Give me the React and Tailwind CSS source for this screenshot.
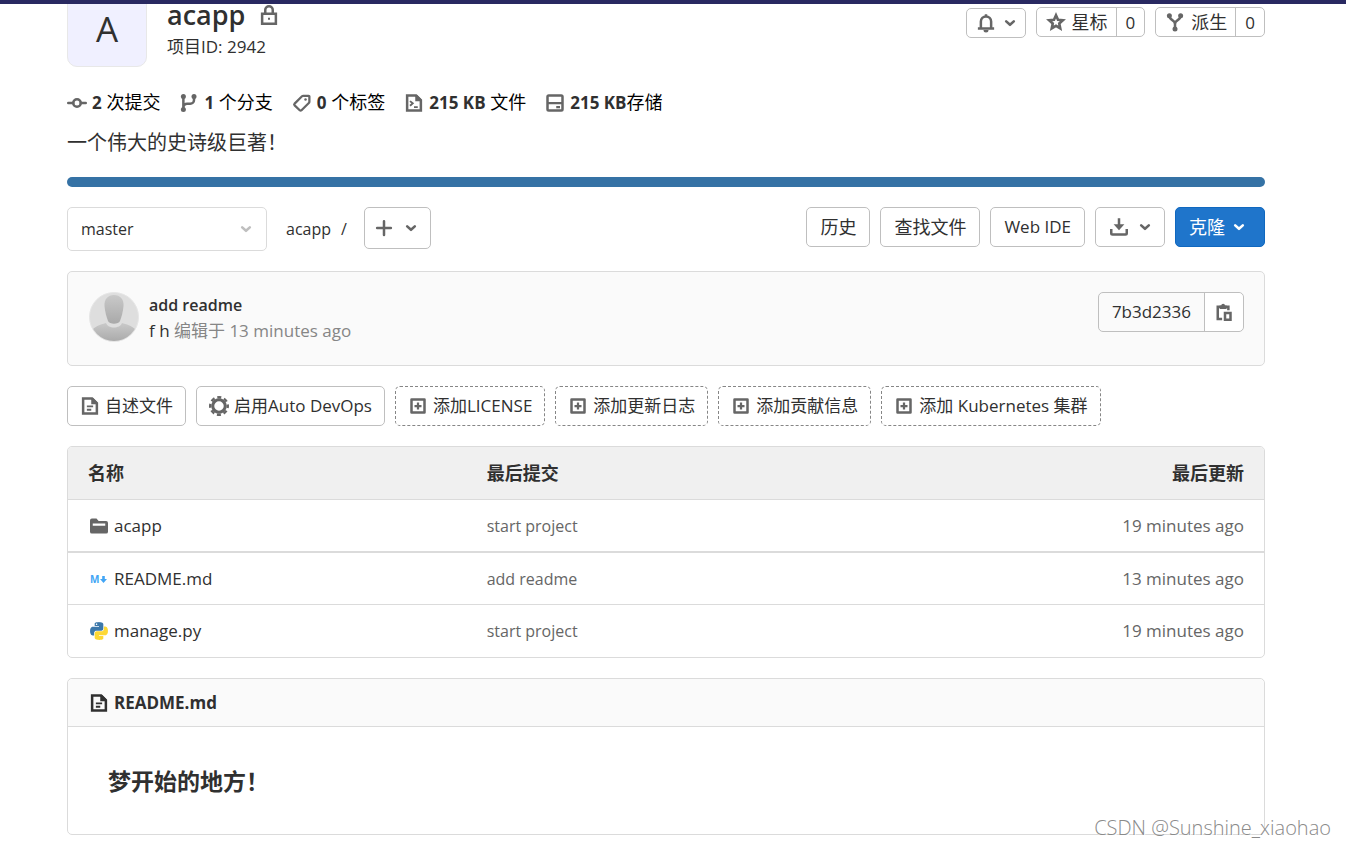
import React, { useState } from 'react';

const Icon = ({ children, className = 'h-5 w-5 text-[#666]' }) => (
  <svg
    viewBox="0 0 16 16"
    fill="none"
    stroke="currentColor"
    strokeWidth="2"
    className={`shrink-0 ${className}`}
    aria-hidden="true"
  >
    {children}
  </svg>
);

const Chevron = ({ className = '' }) => (
  <svg
    viewBox="0 0 12 12"
    fill="none"
    stroke="currentColor"
    strokeWidth="2.6"
    strokeLinecap="round"
    strokeLinejoin="round"
    className={`h-3 w-3 shrink-0 ${className}`}
    aria-hidden="true"
  >
    <path d="M2.2 4.4L6 7.8l3.8-3.4" />
  </svg>
);

const LockIcon = () => (
  <Icon>
    <path d="M2.5 7h11v8h-11zM5 7V4a3 3 0 0 1 6 0v3" />
    <path d="M7.2 10.2h1.6v1.6H7.2z" fill="currentColor" stroke="none" />
  </Icon>
);

const BellIcon = () => (
  <Icon>
    <path d="M3.9 12V6.8a4.1 4.1 0 0 1 8.2 0V12" />
    <path d="M1.5 12.4h13" />
    <path d="M6 13.5h4a2 2 0 0 1-4 0zM7 1h2v2H7z" fill="currentColor" stroke="none" />
  </Icon>
);

const StarIcon = () => (
  <Icon>
    <path d="M8 2.6l1.6 3.6 3.9.4-2.9 2.6.8 3.9L8 11.1l-3.4 2 .8-3.9-2.9-2.6 3.9-.4z" strokeWidth="2.1" />
  </Icon>
);

const ForkIcon = () => (
  <Icon>
    <circle cx="3.5" cy="3" r="2" fill="currentColor" stroke="none" />
    <circle cx="12.5" cy="3" r="2" fill="currentColor" stroke="none" />
    <circle cx="8" cy="13.5" r="2" fill="currentColor" stroke="none" />
    <path d="M3.5 3c0 4 4.5 3 4.5 6.5V13M12.5 3c0 4-4.5 3-4.5 6.5" />
  </Icon>
);

const CommitIcon = () => (
  <Icon>
    <circle cx="8" cy="8" r="3" />
    <path d="M1 8h4M11 8h4" strokeLinecap="round" />
  </Icon>
);

const BranchIcon = () => (
  <Icon>
    <circle cx="3.5" cy="2.8" r="2" fill="currentColor" stroke="none" />
    <circle cx="3.5" cy="13.2" r="2" fill="currentColor" stroke="none" />
    <circle cx="12" cy="2.8" r="2" fill="currentColor" stroke="none" />
    <path d="M3.5 3v10M12 3v2.5a3 3 0 0 1-3 3H6.5a3 3 0 0 0-3 3" />
  </Icon>
);

const TagIcon = () => (
  <Icon>
    <path d="M9 2.2h4.3a.6.6 0 0 1 .6.6V7a1.5 1.5 0 0 1-.45 1.05L7.6 13.8a1 1 0 0 1-1.4 0L2.1 9.9a1 1 0 0 1 0-1.4L8 2.6A1.5 1.5 0 0 1 9 2.2z" strokeWidth="1.8" />
    <circle cx="10.8" cy="5.2" r="1" fill="currentColor" stroke="none" />
  </Icon>
);

const CodeFileIcon = () => (
  <Icon>
    <path d="M2.5 2h7.2l3.8 3.8V14h-11z" />
    <path d="M9 1.5h1.5L14 5v1.5H9z" fill="currentColor" stroke="none" />
    <path d="M4.8 6.5L7 8.3l-2.2 1.9M8 11.3h3" strokeWidth="1.5" />
  </Icon>
);

const DiskIcon = () => (
  <Icon>
    <rect x="2" y="2" width="12" height="12" rx="1" />
    <path d="M2 8h12M9 11.2h3" strokeWidth="1.8" />
  </Icon>
);

const PlusIcon = () => (
  <Icon>
    <path d="M8 2.5v11M2.5 8h11" strokeLinecap="round" />
  </Icon>
);

const DownloadIcon = () => (
  <Icon>
    <path d="M8 1v7M1.8 9.5V13a1 1 0 0 0 1 1h10.4a1 1 0 0 0 1-1V9.5" />
    <path d="M3.7 5.8h8.6L8 10.6z" fill="currentColor" stroke="none" />
  </Icon>
);

const CopyIcon = () => (
  <Icon>
    <path d="M6.5 13.5H3V3.8h8.5v2.7" />
    <path d="M4.5 5.5V2.8h1.3a1.5 1.5 0 0 1 3 0h1.300v2.7z" fill="currentColor" stroke="none" />
    <path d="M8.800 8.800h4.400v5.400H8.800z" />
  </Icon>
);

const DocIcon = ({ className }) => (
  <Icon className={className}>
    <path d="M2.5 2h7.2l3.8 3.8V14h-11z" />
    <path d="M9 1.5h1.500L14 5v1.500H9z" fill="currentColor" stroke="none" />
    <path d="M5.500 8.300h5M5.500 11h3.500" strokeWidth="1.500" />
  </Icon>
);

const GearIcon = () => (
  <Icon>
    <circle cx="8" cy="8" r="5" strokeWidth="2.400" />
    <circle cx="8" cy="8" r="7" strokeWidth="2" strokeDasharray="3.200 2.298" strokeDashoffset="1.600" />
  </Icon>
);

const AddIcon = () => (
  <Icon>
    <path d="M2.800 2.800h10.400v10.400H2.800z" strokeLinejoin="round" />
    <path d="M8 5.200v5.600M5.200 8h5.600" strokeWidth="1.800" />
  </Icon>
);

const FolderIcon = () => (
  <Icon>
    <path
      d="M.8 3.500A1.500 1.500 0 0 1 2.300 2H6l1.700 2h6a1.500 1.500 0 0 1 1.500 1.500v7a1.500 1.500 0 0 1-1.500 1.500H2.300A1.500 1.500 0 0 1 .8 12.500zM3 6v1.700h10V6z"
      fill="currentColor"
      fillRule="evenodd"
      stroke="none"
    />
  </Icon>
);

const MarkdownIcon = () => (
  <svg viewBox="0 0 20 20" className="h-5 w-5 shrink-0" fill="#42a5f5" aria-hidden="true">
    <text x="1" y="14" fontSize="10" fontWeight="700" fontFamily="Open Sans">M</text>
    <path d="M13.200 7h2.600v3H18l-3.500 4-3.500-4h2.200z" />
  </svg>
);

const PythonIcon = () => (
  <svg viewBox="-1.5 -1.5 27 27" className="h-5 w-5 shrink-0" aria-hidden="true">
    <path
      fill="#3c78aa"
      d="M14.25.18l.9.2.73.26.59.3.45.32.34.34.25.34.16.33.1.3.04.26.02.2-.01.13V8.5l-.05.63-.13.55-.21.46-.26.38-.3.31-.33.25-.35.19-.35.14-.33.1-.3.07-.26.04-.21.02H8.77l-.69.05-.59.14-.5.22-.41.27-.33.32-.27.35-.2.36-.15.37-.1.35-.07.32-.04.27-.02.21v3.06H3.17l-.21-.03-.28-.07-.32-.12-.35-.18-.36-.26-.36-.36-.35-.46-.32-.59-.28-.73-.21-.88-.14-1.05-.05-1.23.06-1.22.16-1.04.24-.87.32-.71.36-.57.4-.44.42-.33.42-.24.4-.16.36-.1.32-.05.24-.01h.16l.06.01h8.16v-.83H6.18l-.01-2.75-.02-.37.05-.34.11-.31.17-.28.25-.26.31-.23.38-.2.44-.18.51-.15.58-.12.64-.1.71-.06.77-.04.84-.02 1.27.05zm-6.3 1.98l-.23.33-.08.41.08.41.23.34.33.22.41.09.41-.09.33-.22.23-.34.08-.41-.08-.41-.23-.33-.33-.22-.41-.09-.41.09z"
    />
    <path
      fill="#fdd835"
      d="M21.04 6.11l.28.06.32.12.35.18.36.27.36.35.35.47.32.59.28.73.21.88.14 1.04.05 1.23-.06 1.23-.16 1.04-.24.86-.32.71-.36.57-.4.45-.42.33-.42.24-.4.16-.36.09-.32.05-.24.02-.16-.01h-8.22v.82h5.84l.01 2.76.02.36-.05.34-.11.31-.17.29-.25.25-.31.24-.38.2-.44.17-.51.15-.58.13-.64.09-.71.07-.77.04-.84.01-1.27-.04-1.07-.14-.9-.2-.73-.25-.59-.3-.45-.33-.34-.34-.25-.34-.16-.33-.1-.3-.04-.25-.02-.2.01-.13v-5.34l.05-.64.13-.54.21-.46.26-.38.3-.32.33-.24.35-.2.35-.14.33-.1.3-.06.26-.04.21-.02.13-.01h5.84l.69-.05.59-.14.5-.21.41-.28.33-.32.27-.35.2-.36.15-.36.1-.35.07-.32.04-.28.02-.21V6.07h2.09l.14.01z"
    />
  </svg>
);

const UserAvatar = () => (
  <svg viewBox="0 0 50 50" className="h-[50px] w-[50px] shrink-0" role="img" aria-label="f h">
    <defs>
      <clipPath id="avatar">
        <circle cx="25" cy="25" r="24" />
      </clipPath>
      <linearGradient id="body" x1="0" y1="0" x2="0" y2="1">
        <stop offset="0" stopColor="#c9c9c9" />
        <stop offset="1" stopColor="#a9a9a9" />
      </linearGradient>
    </defs>
    <circle cx="25" cy="25" r="24.5" fill="#dedede" stroke="#e6e6e6" />
    <g clipPath="url(#avatar)" fill="url(#body)">
      <path d="M25 3c6 0 10 4 9.500 11-.5 6-2 11-3.500 15-1.500 3.500-10.500 3.500-12 0-1.500-4-3-9-3.500-15C15 7 19 3 25 3z" />
      <path d="M4 37c3-3 9-5 13-6 2 6 14 6 16 0 4 1 10 3 13 6v13H4z" />
    </g>
  </svg>
);

const projectStats = [
  { icon: CommitIcon, count: '2', label: ' 次提交' },
  { icon: BranchIcon, count: '1', label: ' 个分支' },
  { icon: TagIcon, count: '0', label: ' 个标签' },
  { icon: CodeFileIcon, count: '215 KB', label: ' 文件' },
  { icon: DiskIcon, count: '215 KB', label: '存储' },
];

const quickActions = [
  { icon: DocIcon, label: '自述文件' },
  { icon: GearIcon, label: '启用Auto DevOps' },
  { icon: AddIcon, label: '添加LICENSE', dashed: true },
  { icon: AddIcon, label: '添加更新日志', dashed: true },
  { icon: AddIcon, label: '添加贡献信息', dashed: true },
  { icon: AddIcon, label: '添加 Kubernetes 集群', dashed: true },
];

const files = [
  { icon: FolderIcon, name: 'acapp', commit: 'start project', updated: '19 minutes ago' },
  { icon: MarkdownIcon, name: 'README.md', commit: 'add readme', updated: '13 minutes ago' },
  { icon: PythonIcon, name: 'manage.py', commit: 'start project', updated: '19 minutes ago' },
];

const CountButton = ({ icon: CountIcon, label, count }) => (
  <div className="flex h-[30px] rounded-[5px] border border-[#bfbfbf] bg-white">
    <button type="button" className="flex items-center gap-1.5 pr-2 pl-[9px] text-lg leading-none">
      <CountIcon />
      {label}
    </button>
    <a href="#count" className="flex items-center border-l border-[#bfbfbf] px-[9px] text-[17px] leading-none">
      {count}
    </a>
  </div>
);

const ProjectHeader = () => (
  <header className="flex items-start">
    <div className="flex h-20 w-20 items-center justify-center rounded-[10px] border border-[#e8e8e8] bg-[#f0f0ff] pt-1 text-[35px]">
      A
    </div>
    <div className="ml-5 pt-3.5">
      <h1 className="flex items-center gap-3.5 text-[27px] leading-7 font-semibold">
        acapp
        <LockIcon />
      </h1>
      <p className="mt-1 text-[17px] leading-7">项目ID: 2942</p>
    </div>
    <div className="mt-5 ml-auto flex gap-2.5">
      <button type="button" aria-label="通知" className="mt-px flex h-[30px] items-center gap-2 rounded-[5px] border border-[#bfbfbf] px-[9px] text-[#666]">
        <BellIcon />
        <Chevron />
      </button>
      <CountButton icon={StarIcon} label="星标" count="0" />
      <CountButton icon={ForkIcon} label="派生" count="0" />
    </div>
  </header>
);

const TreeControls = () => {
  const [branch, setBranch] = useState('master');
  const buttonClass = 'flex h-10 items-center rounded-[5px] border border-[#bfbfbf] px-[13px]';

  return (
    <div className="mt-5 flex items-start">
      <div className="relative">
        <select
          aria-label="分支"
          value={branch}
          onChange={(e) => setBranch(e.target.value)}
          className="block h-11 w-[200px] appearance-none rounded-[5px] border border-[#dbdbdb] bg-white px-[13px] text-base"
        >
          <option value="master">master</option>
        </select>
        <Chevron className="pointer-events-none absolute top-4 right-[15px] text-[#bfbfbf]" />
      </div>
      <nav className="ml-[19px] flex h-11 items-center gap-2.5 text-base">
        <a href="#acapp">acapp</a>
        <span>/</span>
      </nav>
      <button type="button" aria-label="添加" className="ml-[17px] flex h-[42px] items-center gap-[11px] rounded-[5px] border border-[#bfbfbf] pr-[13px] pl-[9px] text-[#666]">
        <PlusIcon />
        <Chevron />
      </button>
      <div className="ml-auto flex gap-2.5">
        <button type="button" className={`${buttonClass} text-lg`}>历史</button>
        <button type="button" className={`${buttonClass} text-lg`}>查找文件</button>
        <button type="button" className={`${buttonClass} text-[17px]`}>Web IDE</button>
        <button type="button" aria-label="下载" className={`${buttonClass} gap-2.5 text-[#666]`}>
          <DownloadIcon />
          <Chevron />
        </button>
        <button type="button" className="flex h-10 items-center gap-2 rounded-[5px] border border-[#1068bf] bg-[#1f75cb] pr-[19px] pl-[13px] text-lg text-white">
          克隆
          <Chevron />
        </button>
      </div>
    </div>
  );
};

const LastCommit = () => (
  <section className="mt-5 flex items-start rounded-[5px] border border-[#dbdbdb] bg-[#fafafa] pt-5 pr-5 pb-[21px] pl-[21px]">
    <UserAvatar />
    <div className="ml-2.5 leading-[26px]">
      <a href="#commit" className="block text-base leading-[26px] font-semibold">add readme</a>
      <p className="text-[17px] leading-[26px] text-[#868686]">
        <a href="#author" className="text-[#303030]">f h</a> 编辑于 13 minutes ago
      </p>
    </div>
    <div className="ml-auto flex h-10 rounded-[5px] border border-[#bfbfbf]">
      <span className="flex items-center px-[13px] text-[17px]">7b3d2336</span>
      <button type="button" aria-label="复制" className="flex items-center rounded-r-[5px] border-l border-[#bfbfbf] bg-white px-[9px]">
        <CopyIcon />
      </button>
    </div>
  </section>
);

const FileTable = () => (
  <div className="mt-5 overflow-hidden rounded-[5px] border border-[#dbdbdb]">
    <table className="w-full border-separate border-spacing-0 text-left">
      <thead>
        <tr className="h-[53px] bg-[#f0f0f0] text-lg">
          <th className="w-1/3 border-b border-[#dbdbdb] px-5 font-bold">名称</th>
          <th className="w-1/3 border-b border-[#dbdbdb] px-5 font-bold">最后提交</th>
          <th className="border-b border-[#dbdbdb] px-5 text-right font-bold">最后更新</th>
        </tr>
      </thead>
      <tbody className="text-[17px] [&>tr:first-child]:h-[53px] [&>tr:first-child>td]:border-b-2 [&>tr:last-child>td]:border-b-0">
        {files.map((file) => {
          const FileIcon = file.icon;
          return (
            <tr key={file.name} className="h-[52px]">
              <td className="border-b border-[#dbdbdb] pr-5 pl-[21px]">
                <a href={`#${file.name}`} className="flex items-center gap-[5px]">
                  <FileIcon />
                  {file.name}
                </a>
              </td>
              <td className="border-b border-[#dbdbdb] px-5 text-base text-[#666]">{file.commit}</td>
              <td className="border-b border-[#dbdbdb] px-5 text-right text-[#666]">{file.updated}</td>
            </tr>
          );
        })}
      </tbody>
    </table>
  </div>
);

const Readme = () => (
  <article className="mt-5 rounded-[5px] border border-[#dbdbdb]">
    <div className="flex h-12 items-center gap-[5px] rounded-t-[5px] border-b border-[#dbdbdb] bg-[#fafafa] pr-5 pl-[21px]">
      <DocIcon className="h-5 w-5 text-[#303030]" />
      <a href="#README.md" className="text-[17px] font-bold">README.md</a>
    </div>
    <div className="px-10 pt-[39px] pb-[38px]">
      <h2 className="text-[23px] leading-[30px] font-bold">梦开始的地方！</h2>
    </div>
  </article>
);

const App = () => {
  return (
    <div className="relative bg-white pb-[13px] font-['Open_Sans','Noto_Sans_CJK_SC',sans-serif] text-[#303030]">
      <div className="relative z-10 h-1 bg-[#292961]"></div>
      <main className="-mt-[17px] pr-[81px] pl-[67px]">
        <ProjectHeader />

        <ul className="mt-[22px] flex gap-[19px] text-lg leading-[26px] text-black">
          {projectStats.map(({ icon: StatIcon, count, label }) => (
            <li key={label}>
              <a href="#stats" className="flex items-center gap-[5px]">
                <StatIcon />
                <span className="whitespace-pre">
                  <strong className="text-[17px] font-bold text-[#303030]">{count}</strong>
                  {label}
                </span>
              </a>
            </li>
          ))}
        </ul>
        <p className="mt-3 text-xl leading-[30px]">一个伟大的史诗级巨著！</p>
        <div className="mt-[19px] h-2.5 rounded-[5px] bg-[#3572a5]"></div>

        <TreeControls />
        <LastCommit />

        <div className="mt-5 flex flex-wrap gap-2.5">
          {quickActions.map(({ icon: ActionIcon, label, dashed }) => (
            <button
              key={label}
              type="button"
              className={`flex h-10 items-center gap-[5px] rounded-[5px] border px-3 text-[17px] ${
                dashed ? 'border-dashed border-[#868686]' : 'border-[#bfbfbf]'
              }`}
            >
              <ActionIcon />
              {label}
            </button>
          ))}
        </div>

        <FileTable />
        <Readme />
      </main>
      <p className="pointer-events-none absolute right-[15px] bottom-1.5 text-xl leading-7 font-light text-[#8a8a8a] [text-shadow:1px_1px_0_#fff]">
        CSDN @Sunshine_xiaohao
      </p>
    </div>
  );
};

export default App;
